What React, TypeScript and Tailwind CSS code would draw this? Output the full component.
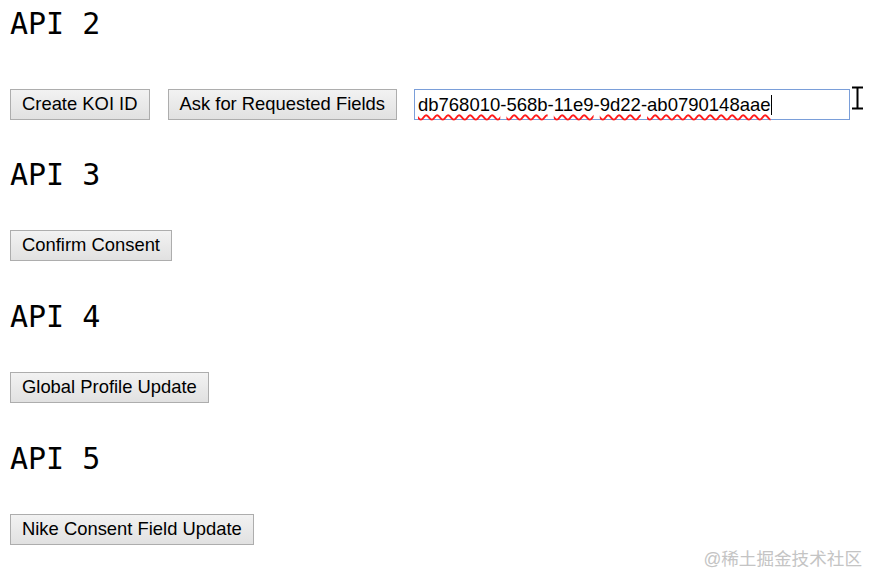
const mono = { fontFamily: '"DejaVu Sans Mono", monospace' };
const sans = { fontFamily: '"Liberation Sans", Arial, sans-serif' };

function Btn({ children }: { children: string }) {
  return (
    <button
      style={sans}
      className="h-[31px] px-[11px] text-[18.4px] leading-none text-black border border-[#adadad] bg-gradient-to-b from-[#f2f2f2] to-[#e1e1e1] shrink-0"
    >
      {children}
    </button>
  );
}

function Heading({ children }: { children: string }) {
  return (
    <h2 style={mono} className="text-[30px] leading-[36px] text-black">
      {children}
    </h2>
  );
}

const wavy = 'underline decoration-wavy decoration-[#ff1a1a] decoration-[1.5px] underline-offset-[3px]';

export default function App() {
  return (
    <div className="w-[869px] h-[578px] bg-white relative overflow-hidden pl-[10px] pt-[6px]">
      <section>
        <Heading>API 2</Heading>
        <div className="flex items-center h-[31px] mt-[47px]">
          <Btn>Create KOI ID</Btn>
          <div className="w-[18px]" />
          <Btn>Ask for Requested Fields</Btn>
          <div className="w-[17px]" />
          <div
            style={sans}
            className="h-[31px] w-[436px] border border-[#7a9ed9] flex items-center pl-[3px] text-[18.5px] text-black"
          >
            <span className={wavy}>db768010</span>-<span className={wavy}>568b</span>-
            <span className={wavy}>11e9</span>-<span className={wavy}>9d22</span>-
            <span className={wavy}>ab0790148aae</span>
            <span className="w-px h-[20px] bg-black" />
          </div>
          <svg width="14" height="24" viewBox="0 0 14 24" className="ml-[1px] -mt-[13px]">
            <path d="M1 1.5h11M1 22.5h11M6.5 1.5v21" stroke="#000" strokeWidth="2" fill="none" />
          </svg>
        </div>
      </section>
      <section className="mt-[37px]">
        <Heading>API 3</Heading>
        <div className="mt-[37px]">
          <Btn>Confirm Consent</Btn>
        </div>
      </section>
      <section className="mt-[38px]">
        <Heading>API 4</Heading>
        <div className="mt-[37px]">
          <Btn>Global Profile Update</Btn>
        </div>
      </section>
      <section className="mt-[38px]">
        <Heading>API 5</Heading>
        <div className="mt-[37px]">
          <Btn>Nike Consent Field Update</Btn>
        </div>
      </section>
      <div
        style={{ fontFamily: '"Liberation Sans", "Noto Sans CJK SC", sans-serif' }}
        className="absolute right-[7px] bottom-[6px] text-[17.6px] text-[#c4c4c4]"
      >
        @稀土掘金技术社区
      </div>
    </div>
  );
}
